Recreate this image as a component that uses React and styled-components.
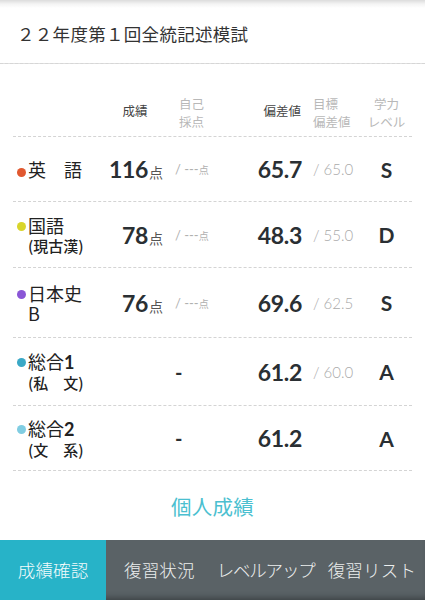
import React from 'react'
import styled, { createGlobalStyle } from 'styled-components'

const GlobalStyle = createGlobalStyle`
  html, body {
    margin: 0;
    padding: 0;
    background: #fff;
  }
  body {
    font-family: Lato, "Noto Sans CJK JP", sans-serif;
    color: #2a2f33;
  }
`

const JP = `"Noto Sans CJK JP", "Noto Sans", sans-serif`
const NUM = `Lato, "Noto Sans CJK JP", sans-serif`

const subjects = [
  { name: '英　語', color: '#e1582f', score: '116', dev: '65.7', target: '65.0', level: 'S', height: 65 },
  { name: '国語', sub: '(現古漢)', color: '#d8d52b', score: '78', dev: '48.3', target: '55.0', level: 'D', height: 66 },
  { name: '日本史', sub: 'B', subPlain: true, color: '#8a56d6', score: '76', dev: '69.6', target: '62.5', level: 'S', height: 70 },
  { name: '総合', num: '1', sub: '(私　文)', color: '#3aa8c6', dev: '61.2', target: '60.0', level: 'A', height: 68 },
  { name: '総合', num: '2', sub: '(文　系)', color: '#80cde2', dev: '61.2', level: 'A', height: 65 },
]

const tabs = ['成績確認', '復習状況', 'レベルアップ', '復習リスト']

const Page = styled.div`
  width: 425px;
  height: 600px;
  display: flex;
  flex-direction: column;
  overflow: hidden;
`

const TitleBar = styled.div`
  height: 64px;
  display: flex;
  align-items: center;
  padding: 3px 0 0 17px;
  box-sizing: border-box;
  border-bottom: 1px dashed #d6d6d6;
  background: linear-gradient(to bottom, #dcdcdc 0px, #f4f4f4 4px, #ffffff 8px);
  font-family: ${JP};
  font-size: 17.5px;
  color: #333;
  letter-spacing: 0.3px;
`

const Table = styled.div`
  margin: 0 13px;
`

const Grid = styled.div`
  display: grid;
  grid-template-columns: 87px 70px 52px 83px 55px 53px;
  border-bottom: 1px dashed #d4d4d4;
`

const HeadRow = styled(Grid)`
  height: 73px;
  align-items: end;
  padding-bottom: 5px;
  box-sizing: border-box;
`

const HeadCell = styled.div`
  font-family: ${JP};
  font-size: 12.5px;
  line-height: 18px;
  color: ${p => (p.strong ? '#444' : '#b8b8b8')};
  text-align: ${p => p.align || 'center'};
  padding-left: ${p => p.pl || 0}px;
  padding-right: ${p => p.pr || 0}px;
  align-self: ${p => (p.strong ? 'center' : 'end')};
  margin-top: ${p => (p.strong ? '26px' : 0)};
`

const Row = styled(Grid)`
  align-items: center;
  box-sizing: border-box;
`

const NameCell = styled.div`
  display: flex;
  align-items: flex-start;
`

const Dot = styled.span`
  width: 9px;
  height: 9px;
  border-radius: 50%;
  background: ${p => p.color};
  margin: ${p => (p.twoLine ? '7px' : '9px')} 2px 0 4px;
  flex: none;
`

const NameText = styled.div`
  display: flex;
  flex-direction: column;
`

const NameMain = styled.span`
  font-family: ${JP};
  font-size: 18px;
  line-height: 21px;
  color: #222;
`

const NameNum = styled.span`
  font-family: ${NUM};
  font-weight: 700;
`

const NameSub = styled.span`
  font-family: ${JP};
  font-size: ${p => (p.plain ? '18px' : '15px')};
  font-weight: ${p => (p.plain ? 400 : 500)};
  line-height: 19px;
  color: #222;
`

const ScoreCell = styled.div`
  text-align: right;
  padding-right: 7px;
  white-space: nowrap;
`

const BigNum = styled.span`
  font-family: ${NUM};
  font-weight: 700;
  font-size: 23px;
  color: #2a2f33;
  letter-spacing: -0.3px;
`

const Unit = styled.span`
  font-family: ${JP};
  font-size: 14px;
  color: #555;
  margin-left: 1px;
`

const SelfCell = styled.div`
  padding-left: 5px;
  white-space: nowrap;
  font-family: ${NUM};
  font-size: 13px;
  color: #b0b0b0;
`

const SmallUnit = styled.span`
  font-family: ${JP};
  font-size: 10px;
`

const Dash = styled.span`
  font-family: ${NUM};
  font-weight: 700;
  font-size: 20px;
  color: #2a2f33;
`

const DevCell = styled.div`
  text-align: right;
  padding-right: 3px;
`

const TargetCell = styled.div`
  padding-left: 8px;
  font-family: ${NUM};
  font-size: 15px;
  font-weight: 300;
  color: #aaa;
  white-space: nowrap;
`

const LevelCell = styled.div`
  text-align: center;
  font-family: ${NUM};
  font-weight: 700;
  font-size: 21px;
  color: #2a2f33;
`

const LinkArea = styled.div`
  flex: 1;
  display: flex;
  align-items: center;
  justify-content: center;
  padding-top: 1px;
`

const LinkText = styled.span`
  font-family: ${JP};
  font-size: 20.5px;
  color: #4bbfd0;
  letter-spacing: 0.3px;
`

const TabBar = styled.div`
  height: 60px;
  display: flex;
  background: #5a6266;
  box-shadow: inset 0 -6px 6px -4px rgba(0, 0, 0, 0.35);
`

const Tab = styled.div`
  flex: 1;
  display: flex;
  align-items: center;
  justify-content: center;
  padding-bottom: 2px;
  background: ${p => (p.active ? '#27b3c8' : 'transparent')};
  font-family: ${JP};
  font-size: 17.5px;
  font-weight: 300;
  color: ${p => (p.active ? '#f2fbfc' : '#eceeee')};
  white-space: nowrap;
  letter-spacing: ${p => (p.tight ? '-1.2px' : '0.2px')};
`

const SubjectRow = ({ s }) => {
  const twoLine = !!s.sub
  return (
    <Row style={{ height: s.height }}>
      <NameCell>
        <Dot color={s.color} twoLine={twoLine} />
        <NameText>
          <NameMain>
            {s.name}
            {s.num && <NameNum>{s.num}</NameNum>}
          </NameMain>
          {s.sub && <NameSub plain={s.subPlain}>{s.sub}</NameSub>}
        </NameText>
      </NameCell>
      <ScoreCell>
        {s.score && (
          <>
            <BigNum>{s.score}</BigNum>
            <Unit>点</Unit>
          </>
        )}
      </ScoreCell>
      <SelfCell>
        {s.score ? (
          <>
            / ---<SmallUnit>点</SmallUnit>
          </>
        ) : (
          <Dash>-</Dash>
        )}
      </SelfCell>
      <DevCell>
        <BigNum>{s.dev}</BigNum>
      </DevCell>
      <TargetCell>{s.target ? `/ ${s.target}` : ''}</TargetCell>
      <LevelCell>{s.level}</LevelCell>
    </Row>
  )
}

const App = () => {
  return (
    <Page>
      <GlobalStyle />
      <TitleBar>２２年度第１回全統記述模試</TitleBar>
      <Table>
        <HeadRow>
          <div />
          <HeadCell strong>成績</HeadCell>
          <HeadCell align="left" pl={9}>
            自己
            <br />
            採点
          </HeadCell>
          <HeadCell strong align="right" pr={4}>
            偏差値
          </HeadCell>
          <HeadCell align="left" pl={8}>
            目標
            <br />
            偏差値
          </HeadCell>
          <HeadCell>
            学力
            <br />
            レベル
          </HeadCell>
        </HeadRow>
        {subjects.map((s, i) => (
          <SubjectRow key={`subject-${i}`} s={s} />
        ))}
      </Table>
      <LinkArea>
        <LinkText>個人成績</LinkText>
      </LinkArea>
      <TabBar>
        {tabs.map((t, i) => (
          <Tab key={t} active={i === 0} tight={i === 2}>
            {t}
          </Tab>
        ))}
      </TabBar>
    </Page>
  )
}

export default App
